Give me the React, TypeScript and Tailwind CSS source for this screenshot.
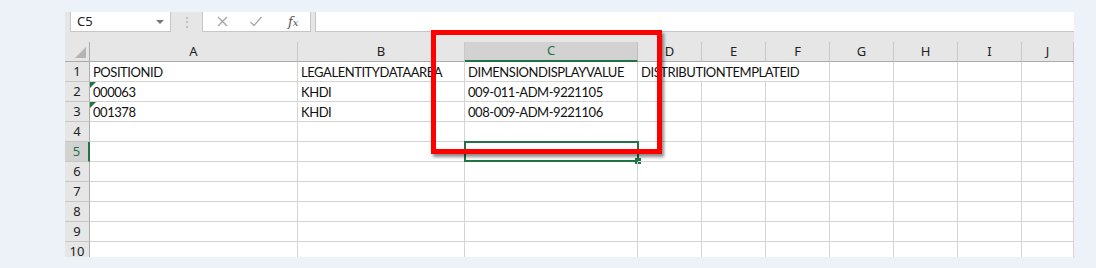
import React from 'react';

const cols = ['A', 'B', 'C', 'D', 'E', 'F', 'G', 'H', 'I', 'J'];

const data: Record<number, string[]> = {
  1: ['POSITIONID', 'LEGALENTITYDATAAREA', 'DIMENSIONDISPLAYVALUE', 'DISTRIBUTIONTEMPLATEID'],
  2: ['000063', 'KHDI', '009-011-ADM-9221105'],
  3: ['001378', 'KHDI', '008-009-ADM-9221106'],
};

const rows = [1, 2, 3, 4, 5, 6, 7, 8, 9, 10];

const cellFont = "font-['Lato','Liberation_Sans',sans-serif] text-[13px] tracking-[-0.45px] text-[#111] leading-[16px]";
const headFont = "font-['Noto_Sans','Liberation_Sans',sans-serif] text-[13px]";

function ErrorFlag() {
  return (
    <span className="absolute left-0 top-0 w-0 h-0 border-t-[6px] border-r-[6px] border-t-[#207346] border-r-transparent" />
  );
}

function Cell({ row, col }: { row: number; col: number }) {
  const text = data[row]?.[col] ?? '';
  const selected = row === 5 && col === 2;
  return (
    <div className={`relative h-[20px] border-r border-b border-[#d4d4d4] flex items-end pl-[3px] pb-[1px] whitespace-nowrap ${cellFont}`}>
      {(row === 2 || row === 3) && col === 0 && <ErrorFlag />}
      {text}
      {selected && (
        <>
          <span className="absolute -left-[1px] -top-[1px] -right-[2px] -bottom-[1px] border-2 border-[#217346]" />
          <span className="absolute -right-[4px] -bottom-[3px] w-[6px] h-[6px] bg-[#217346]" />
        </>
      )}
    </div>
  );
}

export default function App() {
  return (
    <div className="w-[1096px] h-[268px] bg-[#edf2f9] pt-[12px] pl-[65px] overflow-hidden">
      <div className="relative w-[1009px] h-[245px] bg-white overflow-hidden">
        {/* formula bar */}
        <div className="flex h-[20px] bg-[#e6e6e6]">
          <div className="ml-[5px] w-[101px] bg-white border-x border-b border-[#c6c6c6] flex items-center justify-between pl-[6px] pr-[6px] font-['Noto_Sans',sans-serif] text-[13px] text-[#222]">
            <span>C5</span>
            <span className="w-0 h-0 border-x-[4px] border-x-transparent border-t-[4px] border-t-[#777]" />
          </div>
          <div className="w-[31px] flex items-center justify-center text-[#b0b0b0] text-[12px] leading-none">⋮</div>
          <div className="w-[109px] bg-white border-x border-b border-[#c6c6c6] flex items-center text-[#a8a8a8]">
            <svg className="ml-[13px]" width="13" height="13" viewBox="0 0 13 13" fill="none" stroke="currentColor" strokeWidth="1.4">
              <path d="M2 2 L11 11 M11 2 L2 11" />
            </svg>
            <svg className="ml-[20px]" width="14" height="13" viewBox="0 0 14 13" fill="none" stroke="currentColor" strokeWidth="1.4">
              <path d="M1.5 7 L5 10.5 L12.5 2" />
            </svg>
            <span className="ml-[25px] font-['DejaVu_Serif',serif] italic text-[13px] text-[#555] leading-none">
              f<span className="text-[10px]">x</span>
            </span>
          </div>
          <div className="ml-[4px] flex-1 bg-white border-l border-b border-[#c6c6c6]" />
        </div>
        <div className="h-[10px] bg-[#e6e6e6]" />

        {/* grid */}
        <div className="grid grid-cols-[25px_208px_167px_173px_64px_64px_64px_64px_64px_64px_52px]">
          {/* header row */}
          <div className="relative h-[20px] bg-[#e6e6e6] border-r border-b border-[#ababab]">
            <span className="absolute right-[3px] bottom-[3px] w-0 h-0 border-l-[11px] border-l-transparent border-b-[11px] border-b-[#b4b4b4]" />
          </div>
          {cols.map((c, i) => (
            <div
              key={c}
              className={`h-[20px] flex items-center justify-center border-r ${headFont} ${
                i === 2
                  ? 'bg-[#d2d2d2] text-[#217346] border-b-2 border-b-[#217346] border-r-[#bdbdbd]'
                  : 'bg-[#e6e6e6] text-[#222] border-b border-b-[#ababab] border-r-[#c8c8c8]'
              }`}
            >
              {c}
            </div>
          ))}

          {rows.map((r) => (
            <React.Fragment key={r}>
              <div
                className={`h-[20px] flex items-center justify-center border-b border-b-[#c6c6c6] ${headFont} ${
                  r === 5
                    ? 'bg-[#d2d2d2] text-[#217346] border-r-2 border-r-[#217346]'
                    : 'bg-[#e6e6e6] text-[#222] border-r border-r-[#ababab]'
                }`}
              >
                {r}
              </div>
              {r === 1 ? (
                <>
                  <Cell row={1} col={0} />
                  <Cell row={1} col={1} />
                  <Cell row={1} col={2} />
                  <div className={`col-span-3 h-[20px] border-r border-b border-[#d4d4d4] flex items-end pl-[3px] pb-[1px] whitespace-nowrap ${cellFont}`}>
                    {data[1][3]}
                  </div>
                  {[6, 7, 8, 9].map((c) => (
                    <Cell key={c} row={1} col={c} />
                  ))}
                </>
              ) : (
                cols.map((_, c) => <Cell key={c} row={r} col={c} />)
              )}
            </React.Fragment>
          ))}
        </div>

        {/* red annotation box */}
        <div className="absolute left-[366px] top-[18px] w-[231px] h-[124px] border-[5px] border-[#ff0000] shadow-[2px_3px_3px_rgba(0,0,0,0.45)]" />
      </div>
    </div>
  );
}
